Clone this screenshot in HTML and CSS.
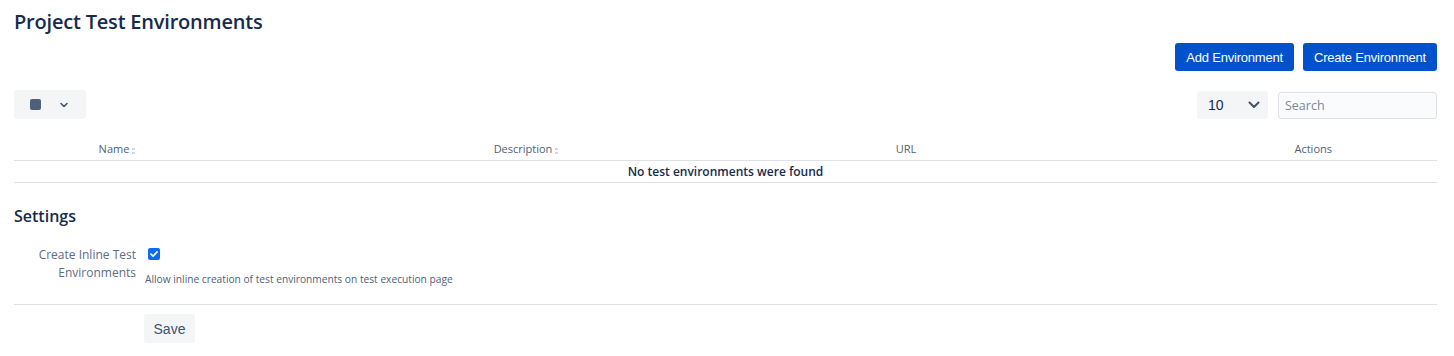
FILE: index.html
```html
<!DOCTYPE html>
<html>
<head>
<meta charset="utf-8">
<link rel="stylesheet" href="styles.css">
</head>
<body>
<div class="page">
  <h1 class="title">Project Test Environments</h1>
  <div class="actions-bar">
    <button class="btn-primary">Add Environment</button>
    <button class="btn-primary">Create Environment</button>
  </div>
  <div class="toolbar">
    <button class="col-toggle">
      <span class="square"></span>
      <svg class="chev-small" width="8" height="6" viewBox="0 0 8 6"><path d="M1 1.5 L4 4.5 L7 1.5" fill="none" stroke="#42526e" stroke-width="1.6" stroke-linecap="round" stroke-linejoin="round"/></svg>
    </button>
    <div class="spacer"></div>
    <div class="page-size">
      <span>10</span>
      <svg width="12" height="8" viewBox="0 0 12 8"><path d="M1.5 1.5 L6 6 L10.5 1.5" fill="none" stroke="#42526e" stroke-width="2" stroke-linecap="round" stroke-linejoin="round"/></svg>
    </div>
    <div class="search">Search</div>
  </div>
  <div class="table">
    <div class="thead">
      <div class="th th-name">Name<span class="sort"></span></div>
      <div class="th th-desc">Description<span class="sort"></span></div>
      <div class="th th-url">URL</div>
      <div class="th th-actions">Actions</div>
    </div>
    <div class="empty-row">No test environments were found</div>
  </div>
  <h2 class="settings-title">Settings</h2>
  <div class="field">
    <div class="field-label">Create Inline Test<br>Environments</div>
    <div class="field-body">
      <span class="checkbox"><svg width="12" height="12" viewBox="0 0 12 12"><rect width="12" height="12" rx="2" fill="#0b6cf0"/><path d="M3 6.2 L5.1 8.2 L9 3.9" fill="none" stroke="#fff" stroke-width="1.7" stroke-linecap="round" stroke-linejoin="round"/></svg></span>
      <div class="field-desc">Allow inline creation of test environments on test execution page</div>
    </div>
  </div>
  <div class="footer">
    <button class="btn-default">Save</button>
  </div>
</div>
</body>
</html>
```
FILE: styles.css
```css
* { box-sizing: border-box; }
body {
  margin: 0;
  font-family: "Open Sans", "Noto Sans", sans-serif;
  color: #172b4d;
  background: #fff;
}
.page {
  padding: 0 17px 0 14px;
}
.title {
  margin: 0;
  padding-top: 8px;
  height: 43px;
  font-size: 20px;
  font-weight: 600;
  line-height: 28px;
  color: #172b4d;
  letter-spacing: -0.2px;
}
.actions-bar {
  display: flex;
  justify-content: flex-end;
  gap: 9px;
}
.btn-primary {
  height: 28px;
  padding: 0 11px;
  border: none;
  border-radius: 3px;
  background: #0052cc;
  color: #fff;
  font-family: "Liberation Sans", Arial, sans-serif;
  font-size: 13px;
  letter-spacing: -0.2px;
}
.toolbar {
  display: flex;
  align-items: center;
  margin-top: 19px;
  height: 29px;
}
.col-toggle {
  display: flex;
  align-items: center;
  width: 72px;
  height: 29px;
  padding: 0 0 0 16px;
  border: none;
  border-radius: 3px;
  background: #f4f5f7;
}
.square {
  width: 11px;
  height: 11px;
  border-radius: 2px;
  background: #505f79;
}
.chev-small { margin-left: 19px; }
.spacer { flex: 1; }
.page-size {
  display: flex;
  align-items: center;
  justify-content: space-between;
  width: 71px;
  height: 28px;
  padding: 0 8px 0 11px;
  border-radius: 3px;
  background: #f4f5f7;
  font-family: "Liberation Sans", Arial, sans-serif;
  font-size: 14px;
  color: #172b4d;
}
.search {
  margin-left: 10px;
  margin-top: 2px;
  width: 159px;
  height: 27px;
  border: 1px solid #dfe1e6;
  border-radius: 3px;
  background: #fafbfc;
  padding: 0 6px;
  font-size: 12.5px;
  line-height: 25px;
  color: #7a869a;
}
.table { margin-top: 21px; }
.thead {
  display: grid;
  grid-template-columns: 200px 624px 136px 1fr;
  border-bottom: 1px solid #dfe1e6;
  height: 21px;
  padding-top: 1px;
}
.th {
  font-size: 11px;
  line-height: 16px;
  color: #505f79;
  text-align: center;
}
.th-name { padding-left: 6px; }
.th-actions { text-align: right; padding-right: 105px; }
.sort {
  display: inline-block;
  width: 3px;
  height: 6px;
  margin-left: 3px;
  vertical-align: -1px;
  background:
    linear-gradient(#d4d8de, #d4d8de) top/3px 2px no-repeat,
    linear-gradient(#d4d8de, #d4d8de) bottom/3px 2px no-repeat;
}
.empty-row {
  height: 22px;
  border-bottom: 1px solid #dfe1e6;
  text-align: center;
  font-size: 12px;
  font-weight: 600;
  line-height: 21px;
  color: #172b4d;
}
.settings-title {
  margin: 22px 0 0;
  font-size: 16px;
  font-weight: 600;
  line-height: 22px;
  color: #172b4d;
}
.field {
  display: flex;
  margin-top: 19px;
}
.field-label {
  width: 122px;
  text-align: right;
  font-size: 12px;
  line-height: 18px;
  color: #5e6c84;
}
.field-body {
  margin-left: 9px;
}
.checkbox {
  display: block;
  margin-left: 3px;
  margin-top: 2px;
  height: 12px;
}
.checkbox svg { display: block; }
.field-desc {
  margin-top: 11px;
  font-size: 10.2px;
  line-height: 16px;
  color: #505f79;
}
.footer {
  margin-top: 17px;
  border-top: 1px solid #dfe1e6;
  padding: 9px 0 0 130px;
}
.btn-default {
  width: 51px;
  height: 29px;
  border: none;
  border-radius: 3px;
  background: #f4f5f7;
  color: #42526e;
  font-family: "Liberation Sans", Arial, sans-serif;
  font-size: 14px;
}
```
